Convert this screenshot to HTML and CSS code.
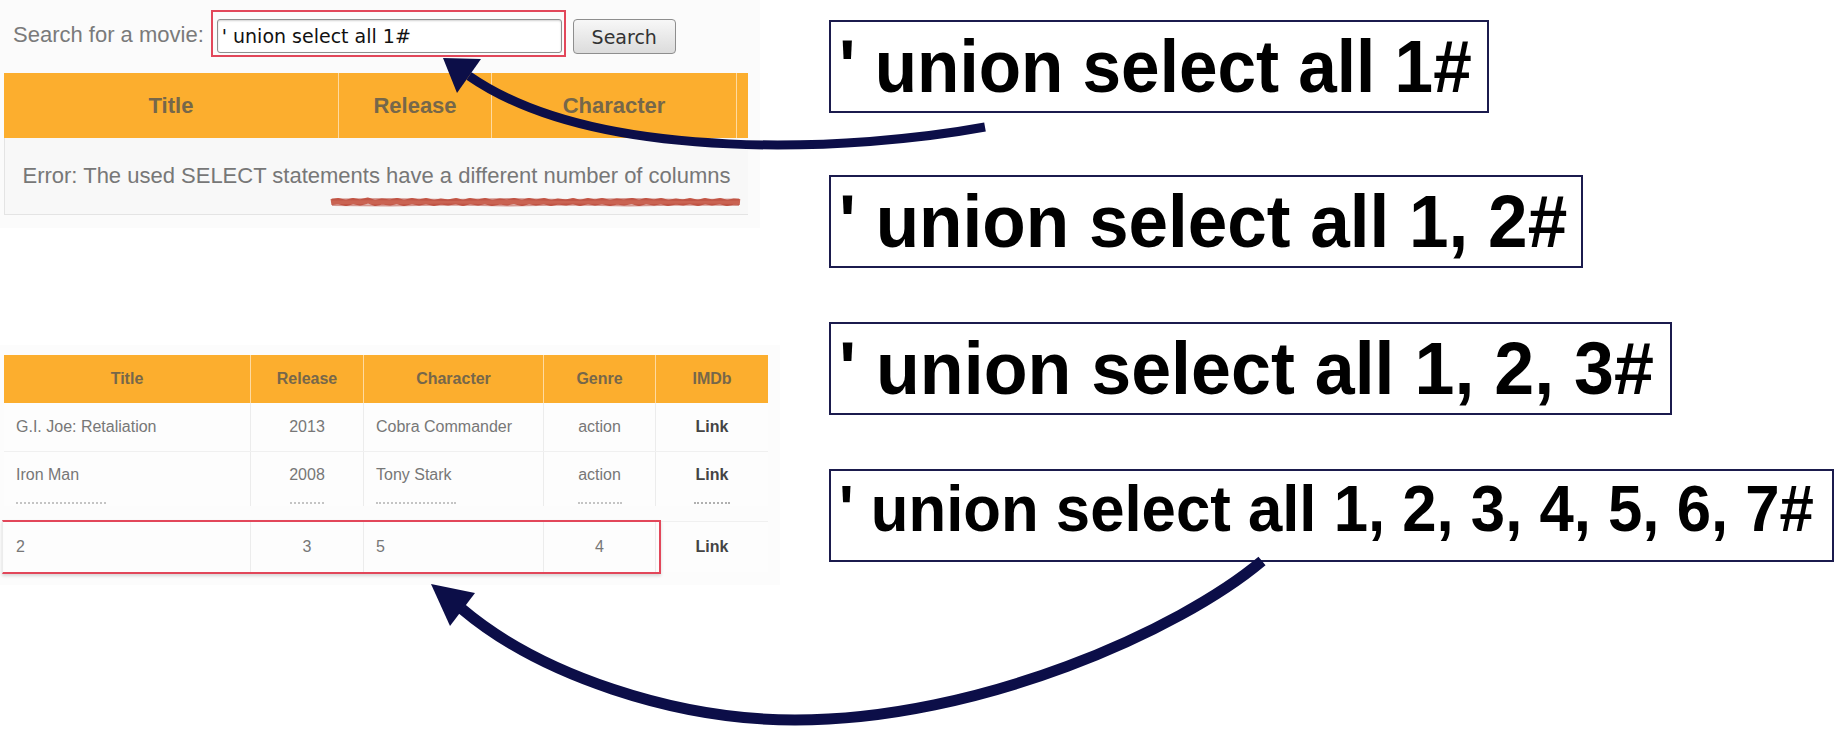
FILE: index.html
```html
<!DOCTYPE html>
<html lang="en">
<head>
<meta charset="utf-8">
<title>union select</title>
<link rel="stylesheet" href="styles.css">
</head>
<body>
<main class="stage">
  <section class="left">
    <div class="shot shot-search">
      <div class="search-row">
        <span class="search-label">Search for a movie:</span>
        <div class="hl-input"><div class="input">' union select all 1#</div></div>
        <div class="btn">Search</div>
      </div>
      <div class="t1">
        <div class="t1-head">
          <div class="th">Title</div>
          <div class="th">Release</div>
          <div class="th">Character</div>
          <div class="th"></div>
        </div>
        <div class="t1-err">
          Error: The used SELECT statements have a different number of columns
          <svg class="squiggle" viewBox="0 0 413 12" preserveAspectRatio="none">
            <path d="M2,6 L9,5 L17,7 L24,5 L31,6.5 L39,4.5 L46,7 L53,5.5 L61,6.5 L68,5 L75,7 L83,5 L90,6.5 L97,5 L105,7 L112,5.5 L119,6.5 L127,5 L134,7 L141,5 L149,6.5 L156,5 L163,7 L171,5.5 L178,6.5 L185,5 L193,7 L200,5 L207,6.5 L215,5 L222,7 L229,5.5 L237,6.5 L244,5 L251,7 L259,5 L266,6.5 L273,5 L281,7 L288,5.5 L295,6.5 L303,5 L310,7 L317,5 L325,6.5 L332,5 L339,7 L347,5.5 L354,6.5 L361,5 L369,7 L376,5 L383,6.5 L391,5 L398,7 L405,5.5 L411,6"/>
            <path class="sq2" d="M3,3.5 L60,3 L120,4 L180,3 L240,4 L300,3 L360,4 L410,3.5"/>
            <path class="sq2" d="M3,9 L60,9.5 L120,8.5 L180,9.5 L240,8.5 L300,9.5 L360,8.5 L410,9"/>
          </svg>
        </div>
      </div>
    </div>

    <div class="shot shot-result">
      <div class="t2">
        <div class="t2-row t2-head">
          <div>Title</div><div>Release</div><div>Character</div><div>Genre</div><div>IMDb</div>
        </div>
        <div class="t2-row t2-body r1">
          <div class="c-l">G.I. Joe: Retaliation</div><div class="c-c">2013</div><div class="c-l">Cobra Commander</div><div class="c-c">action</div><div class="c-c c-link">Link</div>
        </div>
        <div class="t2-row t2-body r2">
          <div class="c-l">Iron Man</div><div class="c-c">2008</div><div class="c-l">Tony Stark</div><div class="c-c">action</div><div class="c-c c-link">Link</div>
        </div>
        <div class="t2-row t2-body partial">
          <div class="c-l"><i class="frag f-title"></i></div><div class="c-c"><i class="frag f-year"></i></div><div class="c-l"><i class="frag f-char"></i></div><div class="c-c"><i class="frag f-genre"></i></div><div class="c-c"><i class="frag f-link"></i></div>
        </div>
        <div class="t2-row t2-body r3">
          <div class="c-l">2</div><div class="c-c">3</div><div class="c-l">5</div><div class="c-c">4</div><div class="c-c c-link">Link</div>
          <div class="hl-row"></div>
        </div>
      </div>
    </div>
  </section>

  <section class="right">
    <div class="qbox q1"><span class="qtext">' union select all 1#</span></div>
    <div class="qbox q2"><span class="qtext">' union select all 1, 2#</span></div>
    <div class="qbox q3"><span class="qtext">' union select all 1, 2, 3#</span></div>
    <div class="qbox q4"><span class="qtext">' union select all 1, 2, 3, 4, 5, 6, 7#</span></div>
  </section>

  <svg class="arrows" viewBox="0 0 1839 729" width="1839" height="729">
    <path class="shaft s1" d="M985,127 C860,150 599,166 469,76"/>
    <polygon class="head" points="443,58 481,59 457,93"/>
    <path class="shaft s2" d="M1262,561 C1180,630 980,720 795,720 C675,720 540,675 462,609"/>
    <polygon class="head" points="431,584 475,593 450,626"/>
  </svg>
</main>
</body>
</html>
```

FILE: styles.css
```css
html, body {
  margin: 0;
  padding: 0;
  background: #ffffff;
}

.stage {
  position: relative;
  width: 1839px;
  height: 729px;
  display: flex;
  overflow: hidden;
  font-family: "Liberation Sans", Arial, sans-serif;
}

/* ---------- left column: screenshots ---------- */
.left {
  width: 829px;
  flex: none;
  display: flex;
  flex-direction: column;
}

.shot-search {
  width: 760px;
  height: 228px;
  box-sizing: border-box;
  padding-top: 10px;
  background: #fbfbfb;
}

.search-row {
  display: flex;
  align-items: flex-start;
  height: 47px;
}

.search-label {
  font-size: 22px;
  line-height: 26px;
  color: #7a7a7a;
  margin: 12px 7px 0 13px;
  white-space: nowrap;
}

.hl-input {
  border: 2px solid #e2475a;
  padding: 7px 2px 2px 4px;
}

.input {
  width: 345px;
  height: 34px;
  box-sizing: border-box;
  border: 1px solid #8f8f8f;
  border-radius: 3px;
  background: #fff;
  box-shadow: inset 0 1px 2px rgba(0, 0, 0, 0.18);
  font-family: "DejaVu Sans", sans-serif;
  font-size: 19px;
  line-height: 32px;
  padding-left: 4px;
  color: #111;
  white-space: pre;
}

.btn {
  margin: 9px 0 0 7px;
  width: 103px;
  height: 35px;
  box-sizing: border-box;
  border: 1px solid #8e8e8e;
  border-radius: 4px;
  background: linear-gradient(#f7f7f7, #dcdcdc);
  font-family: "DejaVu Sans", sans-serif;
  font-size: 19px;
  color: #333;
  display: flex;
  align-items: center;
  justify-content: center;
}

.t1 {
  margin: 16px 0 0 4px;
  width: 744px;
}

.t1-head {
  display: grid;
  grid-template-columns: 334px 153px 245px 12px;
  height: 65px;
  background: #fcae2e;
}

.th {
  display: flex;
  align-items: center;
  justify-content: center;
  font-weight: bold;
  font-size: 22px;
  color: #76674a;
}

.th + .th {
  border-left: 1px solid rgba(255, 255, 255, 0.55);
}

.t1-err {
  position: relative;
  height: 77px;
  box-sizing: border-box;
  border-left: 1px solid #e4e4e4;
  border-bottom: 1px solid #e4e4e4;
  background: #f8f8f8;
  display: flex;
  align-items: center;
  justify-content: center;
  font-size: 22px;
  color: #777;
  white-space: nowrap;
}

.squiggle {
  position: absolute;
  left: 324px;
  top: 58px;
  width: 413px;
  height: 12px;
  fill: none;
}

.squiggle path {
  stroke: #c4523f;
  stroke-width: 6;
  stroke-linejoin: round;
  opacity: 0.9;
}

.squiggle .sq2 {
  stroke: #b8483a;
  stroke-width: 2;
  opacity: 0.55;
}

.shot-result {
  margin-top: 117px;
  width: 780px;
  height: 240px;
  box-sizing: border-box;
  padding-top: 10px;
  background: #fcfcfc;
}

.t2 {
  margin-left: 4px;
  width: 764px;
  display: flex;
  flex-direction: column;
}

.t2-row {
  display: grid;
  grid-template-columns: 246px 113px 180px 112px 113px;
}

.t2-head {
  height: 48px;
  background: #fcae2e;
}

.t2-head > div {
  display: flex;
  align-items: center;
  justify-content: center;
  font-weight: bold;
  font-size: 16px;
  color: #76674a;
}

.t2-head > div + div {
  border-left: 1px solid rgba(255, 255, 255, 0.55);
}

.t2-body {
  background: #fdfdfd;
  font-size: 16px;
  color: #777;
}

.t2-body > div {
  display: flex;
  align-items: center;
  box-sizing: border-box;
  white-space: nowrap;
}

.t2-body > div + div {
  border-left: 1px solid #ececec;
}

.c-l {
  padding-left: 12px;
}

.c-c {
  justify-content: center;
}

.c-link {
  font-weight: bold;
  color: #444;
}

.r1 {
  height: 48px;
  border-bottom: 1px solid #f0f0f0;
}

.r2 {
  height: 46px;
}

.partial {
  height: 8px;
}

.partial > div {
  align-items: center;
}

.frag {
  display: block;
  height: 2px;
  border-bottom: 2px dotted #c4c4c4;
}

.f-title { width: 90px; }
.f-year { width: 34px; }
.f-char { width: 80px; }
.f-genre { width: 44px; }
.f-link { width: 36px; border-bottom-color: #b0b0b0; }

.r3 {
  position: relative;
  height: 50px;
  margin-top: 15px;
  border-top: 1px solid #f0f0f0;
}

.hl-row {
  position: absolute;
  left: -2px;
  top: -2px;
  width: 659px;
  height: 54px;
  box-sizing: border-box;
  border: 2px solid #e2475a;
  box-shadow: 0 2px 3px rgba(0, 0, 0, 0.15);
}

/* ---------- right column: payload boxes ---------- */
.right {
  flex: 1;
  display: flex;
  flex-direction: column;
  align-items: flex-start;
  padding-top: 20px;
  gap: 54px;
}

.qbox {
  box-sizing: border-box;
  height: 93px;
  border: 2px solid #1b1b4d;
  background: #fff;
  display: flex;
  align-items: center;
  padding-left: 8px;
  overflow: hidden;
}

.qtext {
  display: inline-block;
  white-space: pre;
  font-family: "Liberation Sans", Arial, sans-serif;
  font-weight: bold;
  font-size: 75px;
  line-height: 75px;
  color: #000;
  transform-origin: left center;
}

.q1 { width: 660px; }
.q1 .qtext { transform: scaleX(0.924); }

.q2 { width: 754px; margin-top: 8px; }
.q2 .qtext { transform: scaleX(0.948); }

.q3 { width: 843px; }
.q3 .qtext { transform: scaleX(0.957); }

.q4 { width: 1005px; padding-bottom: 14px; }
.q4 .qtext {
  font-size: 64px;
  line-height: 64px;
  transform: scaleX(0.964);
}

/* ---------- overlay arrows ---------- */
.arrows {
  position: absolute;
  left: 0;
  top: 0;
  pointer-events: none;
}

.shaft {
  fill: none;
  stroke: #0c0e48;
}

.s1 { stroke-width: 9; }
.s2 { stroke-width: 11; }

.head {
  fill: #0c0e48;
}
```
